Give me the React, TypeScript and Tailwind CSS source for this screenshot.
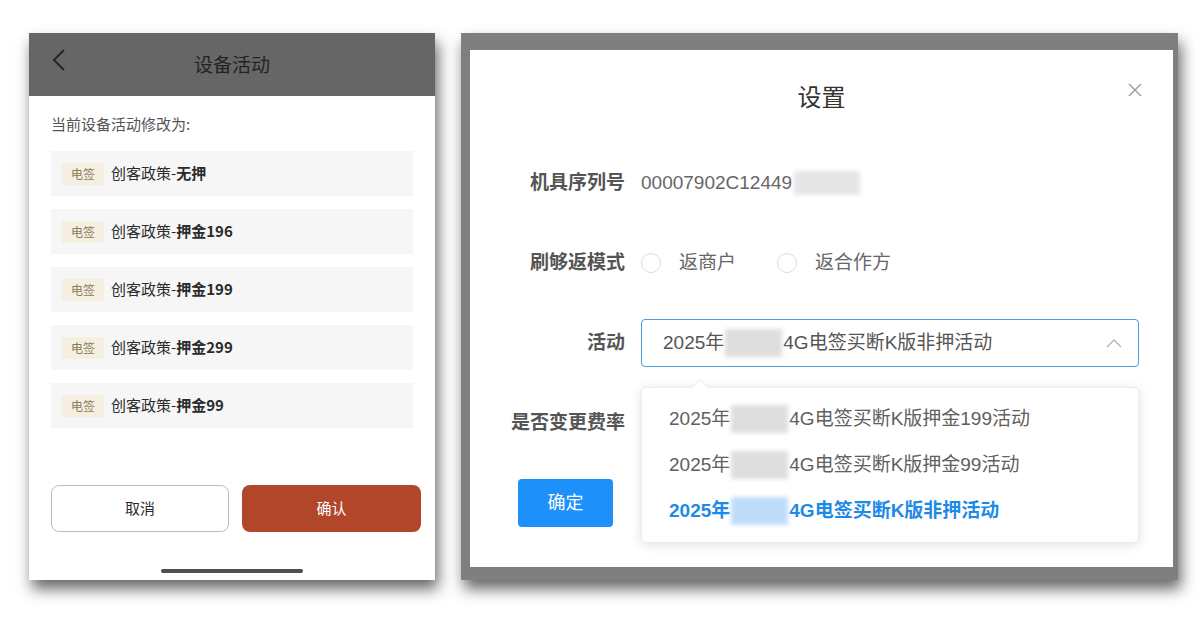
import {Fragment} from "react";

const cjk = "font-['Noto_Sans_CJK_SC',sans-serif]";
const web = "font-['Liberation_Sans','Noto_Sans_CJK_SC',sans-serif]";

const policies = [
  {prefix: "创客政策-", name: "无押"},
  {prefix: "创客政策-", name: "押金196"},
  {prefix: "创客政策-", name: "押金199"},
  {prefix: "创客政策-", name: "押金299"},
  {prefix: "创客政策-", name: "押金99"},
];

function Blur({blue = false}: {blue?: boolean}) {
  return (
    <span
      className={
        blue
          ? "mx-[1px] inline-block h-[28px] w-[57px] bg-[#bfdcfa] blur-[2px]"
          : "mx-[1px] inline-block h-[28px] w-[57px] bg-[#dedede] blur-[2px]"
      }
    />
  );
}

function ActivityText({suffix, blue = false}: {suffix: string; blue?: boolean}) {
  return (
    <span className="flex items-center">
      <span>2025年</span>
      <Blur blue={blue} />
      <span>{suffix}</span>
    </span>
  );
}

function PhonePanel() {
  return (
    <div className={`flex h-[547px] w-[406px] flex-col bg-white shadow-[3px_9px_14px_rgba(0,0,0,0.6)] ${cjk}`}>
      <div className="relative flex h-[63px] items-center justify-center bg-[#666666]">
        <svg
          className="absolute left-[22px] top-[15px]"
          width="16"
          height="24"
          viewBox="0 0 16 24"
          fill="none"
          stroke="#262626"
          strokeWidth="2"
        >
          <path d="M13 2 L3 12 L13 22" />
        </svg>
        <span className="text-[19px] text-[#232323]">设备活动</span>
      </div>

      <div className="flex flex-1 flex-col px-[22px]">
        <div className="mt-[16px] text-[15px] leading-[24px] text-[#555555]">
          当前设备活动修改为:
        </div>
        <div className="mt-[15px] flex flex-col gap-[13px]">
          {policies.map((policy) => (
            <div
              key={policy.name}
              className="flex h-[45px] items-center bg-[#f6f6f6] pl-[11px]"
            >
              <span className="flex h-[22px] w-[42px] items-center justify-center bg-[#f5efe1] text-[12px] text-[#8b7b58]">
                电签
              </span>
              <span className="ml-[7px] text-[15px] text-[#2b2b2b]">
                {policy.prefix}
                <span className="font-semibold">{policy.name}</span>
              </span>
            </div>
          ))}
        </div>

        <div className="mt-[57px] flex w-[370px] gap-[13px]">
          <button
            type="button"
            className="flex h-[47px] w-[178px] shrink-0 items-center justify-center rounded-[8px] border border-[#bdbdbd] text-[15px] text-[#2b2b2b]"
          >
            取消
          </button>
          <button
            type="button"
            className="flex h-[47px] w-[179px] shrink-0 items-center justify-center rounded-[8px] bg-[#b2462b] text-[15px] text-white"
          >
            确认
          </button>
        </div>

        <div className="mt-[37px] flex justify-center">
          <div className="h-[4px] w-[142px] rounded-full bg-[#4f4f4f]" />
        </div>
      </div>
    </div>
  );
}

function FormRow({label, children}: {label: string; children: React.ReactNode}) {
  return (
    <div className="flex h-[48px] items-center">
      <div className="w-[155px] text-right text-[19px] font-bold text-[#555555]">
        {label}
      </div>
      <div className="ml-[16px] flex flex-1 items-center">{children}</div>
    </div>
  );
}

function Radio({label}: {label: string}) {
  return (
    <span className="flex items-center">
      <span className="h-[20px] w-[20px] rounded-full border border-[#dcdcdc] bg-white" />
      <span className="ml-[18px] text-[19px] text-[#666666]">{label}</span>
    </span>
  );
}

function SettingsPanel() {
  return (
    <div className={`h-[547px] w-[717px] bg-[#7f7f7f] pb-[13px] pl-[9px] pr-[5px] pt-[17px] shadow-[3px_9px_14px_rgba(0,0,0,0.6)] ${web}`}>
      <div className="relative flex h-full flex-col bg-white">
        <svg
          className="absolute right-[31px] top-[33px]"
          width="14"
          height="14"
          viewBox="0 0 14 14"
          stroke="#9a9a9a"
          strokeWidth="1.4"
        >
          <path d="M1 1 L13 13 M13 1 L1 13" />
        </svg>

        <div className="mt-[33px] text-center text-[24px] leading-[30px] text-[#333333]">
          设置
        </div>

        <div className="mt-[46px] flex flex-col gap-[32px]">
          <FormRow label="机具序列号">
            <span className="text-[19px] text-[#666666]">00007902C12449</span>
            <span className="ml-[2px] inline-block h-[24px] w-[66px] bg-[#e6e6e6] blur-[2px]" />
          </FormRow>

          <FormRow label="刷够返模式">
            <Radio label="返商户" />
            <span className="w-[41px]" />
            <Radio label="返合作方" />
          </FormRow>

          <FormRow label="活动">
            <div className="relative w-[498px]">
              <div className="flex h-[48px] items-center justify-between rounded-[4px] border border-[#4a9ee0] pl-[21px] pr-[16px] text-[19px] text-[#555555]">
                <ActivityText suffix="4G电签买断K版非押活动" />
                <svg width="16" height="10" viewBox="0 0 16 10" fill="none" stroke="#b4b4b4" strokeWidth="1.4">
                  <path d="M1 9 L8 2 L15 9" />
                </svg>
              </div>

              <div className="absolute left-0 top-[68px] z-10 w-[498px] rounded-[4px] border border-[#ebebeb] bg-white py-[8px] shadow-[0_2px_12px_rgba(0,0,0,0.12)]">
                <div className="absolute -top-[7px] left-[52px] h-[12px] w-[12px] rotate-45 border-l border-t border-[#ebebeb] bg-white" />
                {[
                  "4G电签买断K版押金199活动",
                  "4G电签买断K版押金99活动",
                ].map((item) => (
                  <Fragment key={item}>
                    <div className="flex h-[46px] items-center pl-[27px] text-[19px] text-[#606060]">
                      <ActivityText suffix={item} />
                    </div>
                  </Fragment>
                ))}
                <div className="flex h-[46px] items-center pl-[27px] text-[19px] font-bold text-[#1e8ae8]">
                  <ActivityText suffix="4G电签买断K版非押活动" blue />
                </div>
              </div>
            </div>
          </FormRow>

          <FormRow label="是否变更费率">
            <span />
          </FormRow>
        </div>

        <div className="ml-[48px] mt-[32px]">
          <button
            type="button"
            className="flex h-[48px] w-[95px] items-center justify-center rounded-[4px] bg-[#1e90fa] text-[18px] text-white"
          >
            确定
          </button>
        </div>
      </div>
    </div>
  );
}

export default function App() {
  return (
    <div className="flex h-[626px] w-[1200px] bg-white pl-[29px] pt-[33px]">
      <PhonePanel />
      <div className="ml-[26px]">
        <SettingsPanel />
      </div>
    </div>
  );
}
